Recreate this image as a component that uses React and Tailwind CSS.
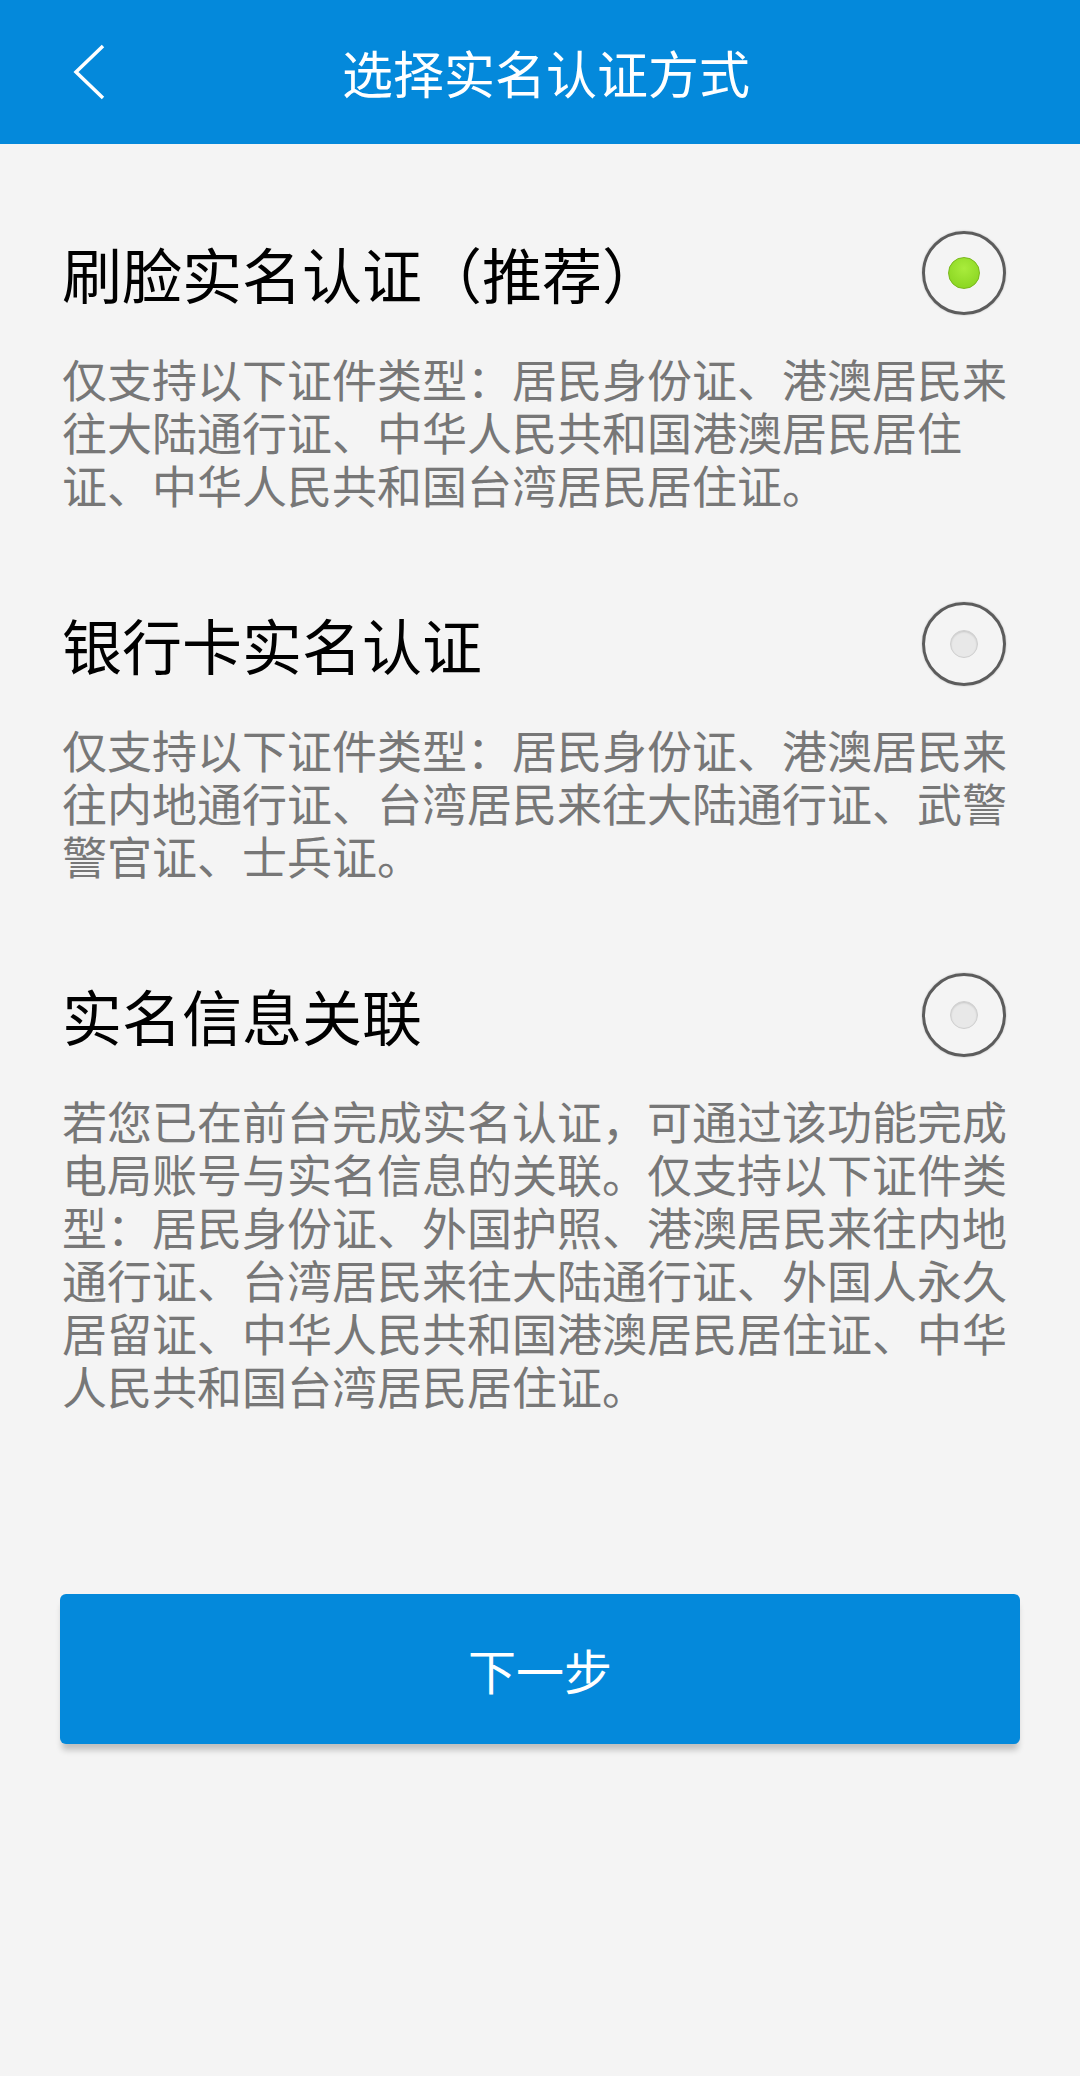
import React, { useState } from "react";

const options = [
    {
        id: "face",
        title: "刷脸实名认证（推荐）",
        desc: "仅支持以下证件类型：居民身份证、港澳居民来往大陆通行证、中华人民共和国港澳居民居住证、中华人民共和国台湾居民居住证。"
    },
    {
        id: "bank",
        title: "银行卡实名认证",
        desc: "仅支持以下证件类型：居民身份证、港澳居民来往内地通行证、台湾居民来往大陆通行证、武警警官证、士兵证。"
    },
    {
        id: "link",
        title: "实名信息关联",
        desc: "若您已在前台完成实名认证，可通过该功能完成电局账号与实名信息的关联。仅支持以下证件类型：居民身份证、外国护照、港澳居民来往内地通行证、台湾居民来往大陆通行证、外国人永久居留证、中华人民共和国港澳居民居住证、中华人民共和国台湾居民居住证。"
    }
];

const Radio = ({ checked }) => (
    <div className="w-[84px] h-[84px] rounded-full border-[3px] border-[#5c5c5c] shadow-[0_0_2px_rgba(0,0,0,0.25)] flex items-center justify-center">
        {checked ? (
            <div className="w-[32px] h-[32px] rounded-full border border-[#79b81c] bg-[radial-gradient(circle_at_50%_35%,#a9ec3c,#84d11c)]" />
        ) : (
            <div className="w-[28px] h-[28px] rounded-full border border-[#cfcfcf] bg-[#e8e8e8] shadow-[inset_0_1px_2px_rgba(0,0,0,0.15)]" />
        )}
    </div>
);

const App = () => {
    const [selected, setSelected] = useState("face");

    return (
        <div className="min-h-[2076px] bg-[#f4f4f4] font-['Noto_Sans_CJK_SC',sans-serif]">
            {/* 顶部标题栏 */}
            <div className="h-[144px] bg-[#0489db] flex items-center relative">
                <button className="absolute left-[60px] top-[36px] w-[60px] h-[72px] flex items-center justify-center">
                    <svg width="40" height="60" viewBox="0 0 40 60" fill="none">
                        <polyline points="33,4 6,30 33,56" stroke="white" strokeWidth="3.5" strokeLinejoin="miter" />
                    </svg>
                </button>
                <h1 className="w-full pl-[12px] text-center text-white text-[51px] leading-none">选择实名认证方式</h1>
            </div>

            <div className="px-[62px] pt-[84px]">
                {options.map((opt, i) => (
                    <div key={opt.id} className={i > 0 ? "mt-[88px]" : ""} onClick={() => setSelected(opt.id)}>
                        <div className="h-[90px] flex items-center justify-between">
                            <span className="text-[60px] leading-none text-black">{opt.title}</span>
                            <div className="mr-[12px]">
                                <Radio checked={selected === opt.id} />
                            </div>
                        </div>
                        <p className="mt-[34px] text-[45px] leading-[53px] text-[#777]">{opt.desc}</p>
                    </div>
                ))}
            </div>

            <div className="px-[60px] pt-[182px]">
                <button className="w-full h-[150px] rounded-[6px] bg-[#0489db] text-white text-[48px] shadow-[0_8px_6px_-2px_rgba(0,0,0,0.22)]">
                    下一步
                </button>
            </div>
        </div>
    );
};

export default App;
